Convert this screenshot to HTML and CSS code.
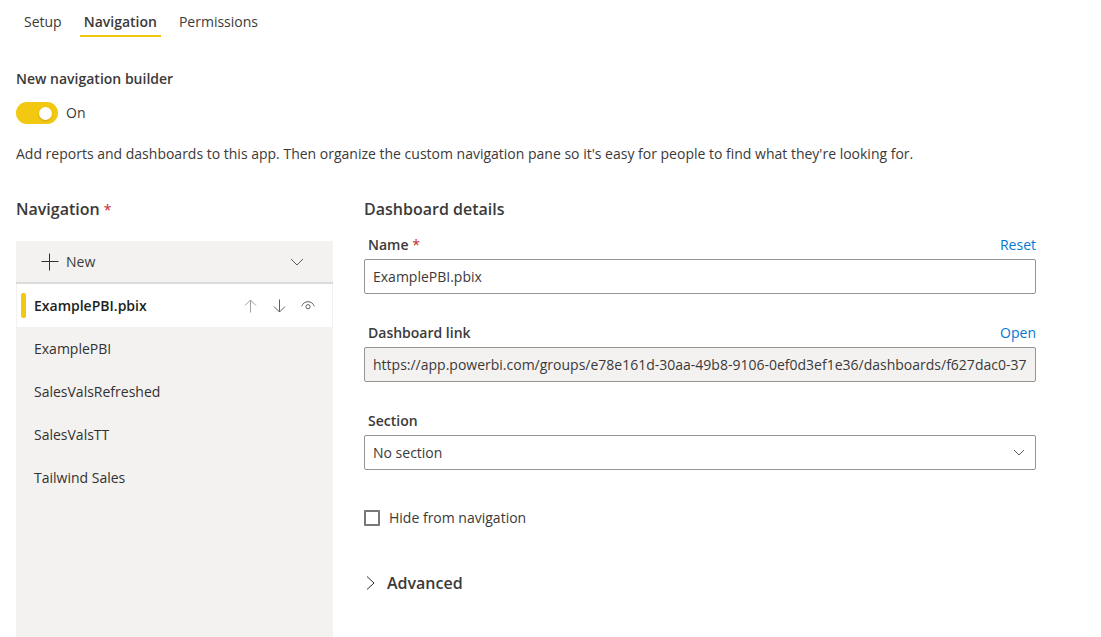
FILE: index.html
```html
<!DOCTYPE html>
<html lang="en">
<head>
<meta charset="utf-8">
<meta name="viewport" content="width=device-width, initial-scale=1">
<title>App navigation</title>
<link rel="stylesheet" href="styles.css">
</head>
<body>
<main class="page">
  <nav class="tabs" aria-label="App settings">
    <button class="tab" type="button">Setup</button>
    <button class="tab tab-active" type="button" aria-current="page">Navigation</button>
    <button class="tab" type="button">Permissions</button>
  </nav>

  <section class="builder">
    <label class="builder-title" for="builder-toggle">New navigation builder</label>
    <div class="toggle-row">
      <input class="toggle" id="builder-toggle" type="checkbox" role="switch" checked>
      <span>On</span>
    </div>
    <p class="intro">Add reports and dashboards to this app. Then organize the custom navigation pane so it's easy for people to find what they're looking for.</p>
  </section>

  <div class="columns">
    <section class="nav-column">
      <h2 class="heading">Navigation <span class="required">*</span></h2>
      <div class="panel">
        <button class="new-button" type="button">
          <svg class="plus" width="18" height="18" viewBox="0 0 18 18" aria-hidden="true"><path d="M8.5 0.5v17M0.5 8.5h17"/></svg>
          <span class="new-text">New</span>
          <svg class="chevron" width="14" height="8" viewBox="0 0 14 8" aria-hidden="true"><path d="M1 1l6 6 6-6"/></svg>
        </button>
        <ul class="items">
          <li class="item item-selected">
            <span class="marker"></span>
            <button class="item-name" type="button">ExamplePBI.pbix</button>
            <button class="icon-button" type="button" aria-label="Move up" disabled>
              <svg class="icon-muted" width="14" height="14" viewBox="0 0 14 14"><path d="M7.5 13.5V1M2 6.5L7.5 1 13 6.5"/></svg>
            </button>
            <button class="icon-button" type="button" aria-label="Move down">
              <svg width="14" height="14" viewBox="0 0 14 14"><path d="M7.5 0.5V13M2 7.500L7.5 13 13 7.500"/></svg>
            </button>
            <button class="icon-button" type="button" aria-label="Hide">
              <svg width="14" height="14" viewBox="0 0 14 14"><path d="M0.7 7.200C1.800 4.300 4.200 2.700 7 2.700s5.200 1.600 6.300 4.500"/><circle cx="7" cy="7.700" r="2.100"/></svg>
            </button>
          </li>
          <li class="item"><button class="item-name" type="button">ExamplePBI</button></li>
          <li class="item"><button class="item-name" type="button">SalesValsRefreshed</button></li>
          <li class="item"><button class="item-name" type="button">SalesValsTT</button></li>
          <li class="item"><button class="item-name" type="button">Tailwind Sales</button></li>
        </ul>
      </div>
    </section>

    <form class="details">
      <h2 class="heading">Dashboard details</h2>
      <div class="field">
        <div class="field-head">
          <label for="name">Name <span class="required">*</span></label>
          <a class="link" href="#reset">Reset</a>
        </div>
        <input class="control" id="name" type="text" value="ExamplePBI.pbix">
      </div>
      <div class="field">
        <div class="field-head">
          <label for="link">Dashboard link</label>
          <a class="link" href="#open">Open</a>
        </div>
        <input class="control control-readonly" id="link" type="text" readonly value="https://app.powerbi.com/groups/e78e161d-30aa-49b8-9106-0ef0d3ef1e36/dashboards/f627dac0-37b2">
      </div>
      <div class="field">
        <div class="field-head"><label for="section">Section</label></div>
        <div class="select-wrap">
          <select class="control" id="section"><option>No section</option></select>
          <svg class="select-chevron" width="12" height="7" viewBox="0 0 12 7" aria-hidden="true"><path d="M1 1l5 5 5-5"/></svg>
        </div>
      </div>
      <div class="check-row">
        <input class="check" id="hide" type="checkbox">
        <label for="hide">Hide from navigation</label>
      </div>
      <button class="advanced" type="button">
        <svg width="9" height="16" viewBox="0 0 9 16" aria-hidden="true"><path class="advanced-arrow" d="M1 1.500l7 6.500-7 6.500"/></svg>
        Advanced
      </button>
    </form>
  </div>
</main>
</body>
</html>
```
FILE: styles.css
```css
* {
  box-sizing: border-box;
}

body {
  margin: 0;
  background: #fff;
  color: #3b3a39;
  font: 14px/20px "Open Sans", "Noto Sans", sans-serif;
}

button,
input,
select {
  margin: 0;
  border: 0;
  padding: 0;
  background: none;
  color: inherit;
  font: inherit;
}

svg {
  flex: none;
  fill: none;
  stroke: #605e5c;
  stroke-width: 1;
}

.page {
  display: flex;
  flex-direction: column;
  min-height: 100vh;
  padding: 12px 65px 0 16px;
}

.tabs {
  display: flex;
  gap: 14px;
  padding-left: 4px;
}

.tab {
  padding: 0 4px 3px;
  border-bottom: 2px solid transparent;
}

.tab-active {
  border-color: #f2c811;
  font-weight: 600;
}

.builder {
  padding-top: 32px;
}

.builder-title {
  display: block;
  font-weight: 600;
}

.toggle-row {
  display: flex;
  align-items: center;
  gap: 8px;
  height: 22px;
  margin-top: 13px;
}

.toggle {
  display: flex;
  align-items: center;
  justify-content: flex-end;
  width: 42px;
  height: 22px;
  padding-right: 6px;
  border-radius: 11px;
  background: #f2c811;
  appearance: none;
}

.toggle::before {
  width: 13px;
  height: 13px;
  border-radius: 50%;
  background: #fff;
  box-shadow: 0 1px 2px #8a720866;
  content: "";
}

.toggle:not(:checked) {
  justify-content: flex-start;
  padding-left: 6px;
  background: #8a8886;
}

.intro {
  margin: 20px 0 0;
}

.columns {
  display: flex;
  flex: 1;
  gap: 31px;
  padding-top: 35px;
}

.nav-column {
  display: flex;
  flex: 0 0 317px;
  flex-direction: column;
}

.heading {
  margin: 0;
  font-size: 16px;
  font-weight: 600;
  line-height: 20px;
}

.required {
  color: #c4262e;
  font-size: 14px;
  font-weight: 400;
}

.panel {
  flex: 1;
  margin-top: 21px;
  background: #f3f2f1;
}

.new-button {
  display: flex;
  align-items: center;
  width: 100%;
  height: 43px;
  padding: 0 29px 0 25px;
  border-bottom: 2px solid #dddbd9;
  text-align: left;
}

.plus {
  stroke: #323130;
}

.new-text {
  flex: 1;
  padding-left: 7px;
}

.items {
  margin: 0;
  padding: 0 1px;
  list-style: none;
}

.item {
  display: flex;
  align-items: center;
  height: 43px;
  padding: 0 17px;
  color: #323130;
}

.item-selected {
  padding-left: 4px;
  background: #fff;
  color: #201f1e;
  font-weight: 600;
}

.marker {
  width: 5px;
  height: 25px;
  margin-right: 8px;
  border-radius: 2px;
  background: #f2c811;
}

.item-name {
  flex: 1;
  text-align: left;
}

.icon-button {
  display: flex;
  margin-left: 15px;
}

.icon-muted {
  stroke: #a19f9d;
}

.details {
  flex: 1;
  min-width: 0;
}

.field {
  padding-top: 16px;
}

.field + .field {
  padding-top: 29px;
}

.field-head {
  display: flex;
  justify-content: space-between;
  padding: 0 0 4px 4px;
  font-weight: 600;
}

.link {
  color: #0078d4;
  font-weight: 400;
  text-decoration: none;
}

.control {
  display: block;
  width: 100%;
  height: 35px;
  padding: 0 8px;
  border: 1px solid #979593;
  border-radius: 2px;
  background: #fff;
}

.control-readonly {
  background: #f3f2f1;
}

.select-wrap {
  display: grid;
  align-items: center;
}

.select-wrap > * {
  grid-area: 1 / 1;
}

.select-wrap select {
  appearance: none;
}

.select-chevron {
  justify-self: end;
  margin-right: 11px;
  pointer-events: none;
}

.check-row {
  display: flex;
  align-items: center;
  gap: 9px;
  padding-top: 38px;
}

.check {
  width: 16px;
  height: 16px;
  border: 2px solid #797775;
  border-radius: 1px;
  appearance: none;
}

.check:checked {
  background: #f2c811;
}

.advanced {
  display: flex;
  align-items: center;
  gap: 12px;
  margin-top: 45px;
  padding-left: 2px;
  font-size: 16px;
  font-weight: 600;
  line-height: 20px;
}

.advanced-arrow {
  stroke: #323130;
}
```
